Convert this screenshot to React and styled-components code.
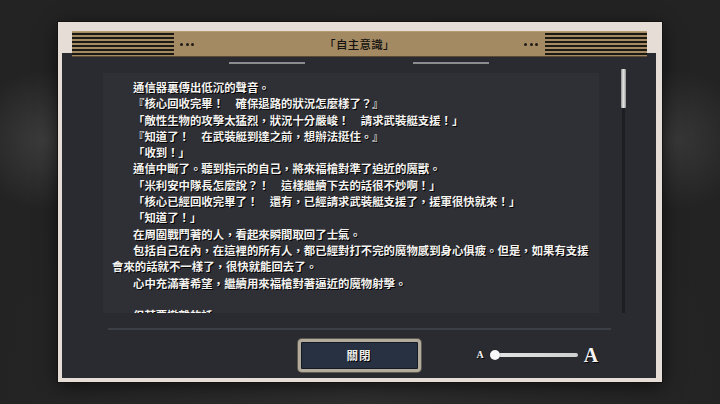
import React from 'react';
import styled, { createGlobalStyle } from 'styled-components';

const lines = [
  { text: '通信器裏傳出低沉的聲音。', indent: true },
  { text: '『核心回收完畢！　確保退路的狀況怎麼樣了？』', indent: true },
  { text: '「敵性生物的攻擊太猛烈，狀況十分嚴峻！　請求武裝艇支援！」', indent: true },
  { text: '『知道了！　在武裝艇到達之前，想辦法挺住。』', indent: true },
  { text: '「收到！」', indent: true },
  { text: '通信中斷了。聽到指示的自己，將來福槍對準了迫近的魔獸。', indent: true },
  { text: '「米利安中隊長怎麼說？！　這樣繼續下去的話很不妙啊！」', indent: true },
  { text: '「核心已經回收完畢了！　還有，已經請求武裝艇支援了，援軍很快就來！」', indent: true },
  { text: '「知道了！」', indent: true },
  { text: '在周圍戰鬥著的人，看起來瞬間取回了士氣。', indent: true },
  { text: '包括自己在內，在這裡的所有人，都已經對打不完的魔物感到身心俱疲。但是，如果有支援', indent: true },
  { text: '會來的話就不一樣了，很快就能回去了。', indent: false },
  { text: '心中充滿著希望，繼續用來福槍對著逼近的魔物射擊。', indent: true },
  { text: '', indent: false },
  { text: '但若要撤離的話', indent: true },
];

const GlobalStyle = createGlobalStyle`
  html, body { margin:0; padding:0; width:720px; height:404px; overflow:hidden; }
  body {
    background:
      radial-gradient(circle at 45px 140px, rgba(80,80,80,0.55) 0, rgba(80,80,80,0) 70px),
      radial-gradient(circle at 675px 140px, rgba(80,80,80,0.45) 0, rgba(80,80,80,0) 70px),
      radial-gradient(ellipse at 50% 100%, #2e2e2e 0, #232323 70%);
    background-color:#262626;
  }
`;

const Screen = styled.div`
  width:720px; height:404px; box-sizing:border-box; padding:22px 0 0 58px;
`;

const Frame = styled.div`
  width:604px; height:360px; box-sizing:border-box; padding:9px 6px 4px 4px;
  background:#e5ddd6; box-shadow:0 0 0 1px #141414, 0 4px 18px rgba(0,0,0,0.6);
  display:flex; flex-direction:column;
`;

const Header = styled.div`
  position:relative; z-index:1; height:26px; box-sizing:border-box; margin:0 9px 0 10px;
  display:flex; align-items:center;
  background:#a38a62; border-top:1px solid #b69e74; border-bottom:1px solid #5a4a33;
`;

const Stripes = styled.div`
  width:102px; align-self:stretch; margin:1px 0;
  background:repeating-linear-gradient(to bottom, #1c1812 0 2px, #a38a62 2px 4px);
`;

const Dots = styled.div`
  display:flex; gap:2.5px; margin:0 7px 0 6px;
  span{ width:3px; height:3px; border-radius:50%; background:#1e1b16; }
`;

const Title = styled.div`
  flex:1; text-align:center; font-family:"Noto Sans CJK TC", sans-serif; font-size:11.5px;
  font-weight:500; color:#141210; letter-spacing:0.3px;
`;

const Panel = styled.div`
  flex:1; margin-top:-4px; background:#2a2b30; display:flex; flex-direction:column;
`;

const TabRow = styled.div`
  height:16px; box-sizing:border-box; padding-top:9px; display:flex; justify-content:center; gap:108px;
`;

const TabLine = styled.div`
  width:76px; height:2px; background:#8c8c8f;
`;

const Body = styled.div`
  display:flex; height:244px;
`;

const TextArea = styled.div`
  margin:4px 0 0 41px; width:496px; height:240px; box-sizing:border-box; padding:6px 0 0 9px;
  background:#2f3036; overflow:hidden;
`;

const Line = styled.div`
  height:16.3px; line-height:16.3px; white-space:nowrap;
  padding-left:${p => (p.$indent ? '21px' : '0')};
  font-family:"Noto Sans CJK TC", sans-serif; font-weight:700; font-size:11.4px;
  color:#f4f3f0; text-shadow:1px 1px 0 #000;
`;

const Scroll = styled.div`
  margin-left:22px; width:5px; display:flex; flex-direction:column; align-items:center;
`;

const Thumb = styled.div`
  width:5px; height:39px; border-radius:1px;
  background:linear-gradient(to right, #8e8e8e, #e6e6e6 45%, #cfcfcf 65%, #8e8e8e);
`;

const Track = styled.div`
  width:3px; flex:1; background:#1d1e21;
`;

const Separator = styled.div`
  width:503px; height:1.5px; margin:15px 0 0 46px; background:#3d3f47;
`;

const Footer = styled.div`
  margin-top:9px; display:grid; grid-template-columns:1fr auto 1fr; align-items:center;
`;

const CloseButton = styled.button`
  grid-column:2; width:123px; height:33px; box-sizing:border-box; padding:0;
  border:3px solid #b3ac9c; border-radius:4px; background:#283142;
  box-shadow:0 0 0 1px #5e5a50, inset 0 0 0 1px #151922;
  font-family:"Noto Sans CJK TC", sans-serif; font-weight:700; font-size:11.5px; letter-spacing:1px;
  color:#f0efec; text-shadow:1px 1px 0 #000;
`;

const Slider = styled.div`
  display:flex; align-items:center; padding-left:56px;
`;

const Glyph = styled.span`
  font-family:"Liberation Serif", serif; font-weight:700; color:#f5f5f5; text-shadow:1px 1px 0 #000;
  font-size:${p => p.$size}px; line-height:1;
`;

const SliderTrack = styled.div`
  position:relative; width:88px; height:4px; margin:0 6px; border-radius:2px;
  background:linear-gradient(to right, #e4e4e4, #cfcfcf);
`;

const Knob = styled.div`
  position:absolute; left:0; top:-3px; width:10px; height:10px; border-radius:50%;
  background:#f7f7f7; box-shadow:0 0 1px rgba(0,0,0,0.6);
`;

export default function App() {
  return (
    <Screen>
      <GlobalStyle />
      <Frame>
        <Header>
          <Stripes />
          <Dots><span /><span /><span /></Dots>
          <Title>「自主意識」</Title>
          <Dots><span /><span /><span /></Dots>
          <Stripes />
        </Header>
        <Panel>
          <TabRow>
            <TabLine />
            <TabLine />
          </TabRow>
          <Body>
            <TextArea>
              {lines.map((l, i) => (
                <Line key={i} $indent={l.indent}>{l.text || '\u00a0'}</Line>
              ))}
            </TextArea>
            <Scroll>
              <Thumb />
              <Track />
            </Scroll>
          </Body>
          <Separator />
          <Footer>
            <CloseButton>關閉</CloseButton>
            <Slider>
              <Glyph $size={10}>A</Glyph>
              <SliderTrack><Knob /></SliderTrack>
              <Glyph $size={20}>A</Glyph>
            </Slider>
          </Footer>
        </Panel>
      </Frame>
    </Screen>
  );
}
